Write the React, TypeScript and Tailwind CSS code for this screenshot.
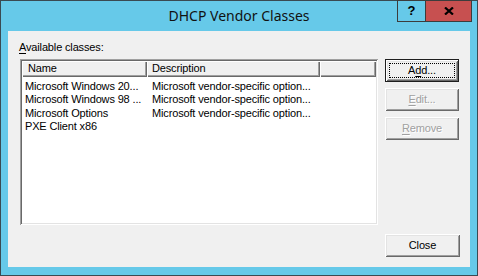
import React from 'react';

const bevel =
  'shadow-[inset_1px_1px_0_#ffffff,inset_-1px_-1px_0_#696969,inset_2px_2px_0_#e3e3e3,inset_-2px_-2px_0_#a0a0a0]';

type BtnProps = { children: React.ReactNode; isDefault?: boolean; disabled?: boolean; className?: string };

function Btn({ children, isDefault, disabled, className }: BtnProps) {
  if (isDefault) {
    return (
      <div className={`h-[23px] border border-[#1e1e1e] bg-[#f0f0f0] ${className ?? ''}`}>
        <div className={`relative flex h-full w-full items-center justify-center ${bevel}`}>
          <div className="absolute inset-[3px] border border-dotted border-black" />
          <span className="text-black">{children}</span>
        </div>
      </div>
    );
  }
  return (
    <div className={`flex h-[23px] items-center justify-center bg-[#f0f0f0] ${bevel} ${className ?? ''}`}>
      <span className={disabled ? 'text-[#a0a0a0] [text-shadow:1px_1px_0_#ffffff]' : 'text-black'}>{children}</span>
    </div>
  );
}

const rows = [
  ['Microsoft Windows 20...', 'Microsoft vendor-specific option...'],
  ['Microsoft Windows 98 ...', 'Microsoft vendor-specific option...'],
  ['Microsoft Options', 'Microsoft vendor-specific option...'],
  ['PXE Client x86', ''],
];

const headCell =
  'h-[16px] bg-[#f0f0f0] shadow-[inset_1px_1px_0_#ffffff,inset_-1px_-1px_0_#696969,inset_-2px_-2px_0_#a0a0a0]';

export default function App() {
  return (
    <div className="relative flex h-[276px] w-[478px] flex-col border border-[#3a4a52] bg-[#66c9e9] font-['Liberation_Sans',Arial,sans-serif] text-[11px] tracking-[-0.15px] text-black">
      {/* title bar */}
      <div className="flex h-[30px] items-center justify-center pb-[1px] font-['Noto_Sans',sans-serif] text-[14px] tracking-normal text-[#111]">
        DHCP Vendor Classes
      </div>
      <div className="absolute -top-px right-[5px] flex h-[22px] border border-[#3c3c3c]">
        <div className="flex w-[27px] items-center justify-center bg-[#66c9e9] text-[13px] font-bold">?</div>
        <div className="flex w-[46px] items-center justify-center border-l border-[#3c3c3c] bg-[#c75050]">
          <svg width="10" height="8" viewBox="0 0 10 8">
            <path d="M1 0.5 L9 7.5 M9 0.5 L1 7.5" stroke="#000" strokeWidth="2.2" />
          </svg>
        </div>
      </div>

      {/* client */}
      <div className="mx-[7px] flex h-[236px] flex-col bg-[#f0f0f0] pl-[12px] pt-[10px]">
        <div className="h-[13px] leading-[13px] -ml-px">
          <span className="underline underline-offset-[2px]">A</span>vailable classes:
        </div>
        <div className="mt-[5px] flex">
          <div className="h-[166px] w-[358px] bg-white p-[2px] shadow-[inset_1px_1px_0_#a0a0a0,inset_-1px_-1px_0_#ffffff,inset_2px_2px_0_#696969,inset_-2px_-2px_0_#e3e3e3]">
            <div className="flex">
              <div className={`${headCell} w-[125px] pl-[6px] leading-[15px]`}>Name</div>
              <div className={`${headCell} w-[173px] pl-[5px] leading-[15px]`}>Description</div>
              <div className={`${headCell} w-[56px]`} />
            </div>
            <div className="pt-[3px]">
              {rows.map(([n, d]) => (
                <div key={n} className="flex h-[13.4px] leading-[13px]">
                  <div className="w-[125px] pl-[3px]">{n}</div>
                  <div className="pl-[5px]">{d}</div>
                </div>
              ))}
            </div>
          </div>
          <div className="ml-[7px] flex w-[74px] flex-col gap-[6px]">
            <Btn isDefault>
              A<span className="underline underline-offset-[2px]">d</span>d...
            </Btn>
            <Btn disabled>
              <span className="underline underline-offset-[2px]">E</span>dit...
            </Btn>
            <Btn disabled>
              <span className="underline underline-offset-[2px]">R</span>emove
            </Btn>
          </div>
        </div>
        <div className="mt-[9px] flex justify-end pr-[10px]">
          <Btn className="w-[75px]">Close</Btn>
        </div>
      </div>
    </div>
  );
}
